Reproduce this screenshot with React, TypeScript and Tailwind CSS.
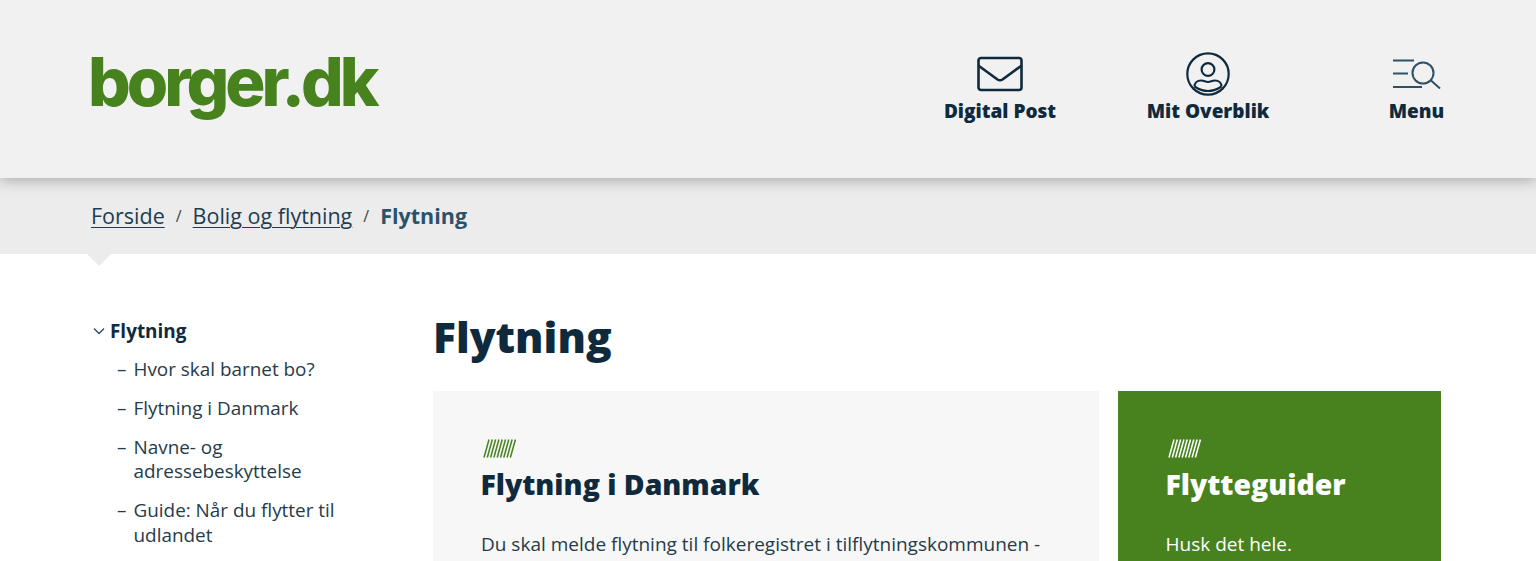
const navItems = [
  "Hvor skal barnet bo?",
  "Flytning i Danmark",
  "Navne- og adressebeskyttelse",
  "Guide: Når du flytter til udlandet",
];

const Hatch = ({ className }: { className: string }) => (
  <svg width="33" height="19" viewBox="0 0 33 19" className={className} fill="none" stroke="currentColor" strokeWidth="1.5">
    {[0, 1, 2, 3, 4, 5, 6, 7, 8].map((i) => (
      <path key={i} d={`M${1 + i * 3.3} 18.5 L${6 + i * 3.3} 0.5`} />
    ))}
  </svg>
);

const MailIcon = () => (
  <svg width="46" height="36" viewBox="0 0 46 36" fill="none" stroke="#0f2a3d" strokeWidth="2.6" strokeLinejoin="round" strokeLinecap="round">
    <rect x="1.5" y="2" width="43" height="32" rx="2.5" />
    <path d="M2 10 L20.5 23.5 Q23 25 25.5 23.5 L44 10" />
  </svg>
);

const UserIcon = () => (
  <svg width="44" height="44" viewBox="0 0 44 44" fill="none" stroke="#0f2a3d" strokeWidth="2.2">
    <circle cx="22" cy="22" r="20.7" />
    <circle cx="22" cy="17.5" r="6.4" />
    <path d="M8.5 34.5 C8.5 31 11 28.5 15 28.5 C18.5 28.5 19 30 22 30 C25 30 25.5 28.5 29 28.5 C33 28.5 35.5 31 35.5 34.5" />
    <path d="M8.5 34.5 Q22 43.5 35.5 34.5" />
  </svg>
);

const MenuIcon = () => (
  <svg width="48" height="30" viewBox="0 0 48 30" fill="none" stroke="#2f5066" strokeWidth="2">
    <path d="M0 1.5 H21" />
    <path d="M0 14.5 H15" />
    <path d="M0 28 H29" />
    <circle cx="30" cy="14" r="10.5" />
    <path d="M38 21.5 L47 29.5" />
  </svg>
);

const HeaderLink = ({ label, icon, className }: { label: string; icon: React.ReactNode; className: string }) => (
  <a className={`flex flex-col items-center ${className}`}>
    <div className="h-[44px] flex items-center justify-center">{icon}</div>
    <span className="mt-[3px] whitespace-nowrap text-[19px] leading-[25px] font-extrabold text-[#0f2a3d]">{label}</span>
  </a>
);

export default function App() {
  return (
    <div className="h-screen overflow-hidden bg-white font-['Open_Sans',sans-serif] text-[#0f2a3d]">
      <header className="relative z-10 h-[178px] bg-[#f1f1f1] shadow-[0_2px_14px_rgba(0,0,0,0.3)] pl-[88px] flex items-start">
        <div className="mt-[42px] font-['Inter',sans-serif] font-extrabold text-[#47821f] text-[67px] leading-[80px] tracking-[-4px]">
          borger.dk
        </div>
        <nav className="ml-auto flex items-start pt-[52px]">
          <HeaderLink label="Digital Post" icon={<MailIcon />} className="w-[112px] mr-[91px]" />
          <HeaderLink label="Mit Overblik" icon={<UserIcon />} className="w-[122px] mr-[120px]" />
          <HeaderLink label="Menu" icon={<MenuIcon />} className="w-[55px] mr-[92px]" />
        </nav>
      </header>

      <div className="relative h-[76px] bg-[#ececec] pl-[91px] flex items-center text-[21.5px]">
        <a className="underline underline-offset-[3px] decoration-1 text-[#1c3d52]">Forside</a>
        <span className="mx-[11px] text-[16px] text-[#444]">/</span>
        <a className="underline underline-offset-[3px] decoration-1 text-[#1c3d52]">Bolig og flytning</a>
        <span className="mx-[11px] text-[16px] text-[#444]">/</span>
        <span className="font-bold text-[#2b5269]">Flytning</span>
        <div className="absolute left-[87px] top-full w-0 h-0 border-x-[12px] border-x-transparent border-t-[12px] border-t-[#ececec]" />
      </div>

      <div className="flex pl-[90px] pr-[95px]">
        <aside className="w-[343px] shrink-0 pt-[65px]">
          <div className="flex items-center h-[24px]">
            <svg width="12" height="8" viewBox="0 0 12 8" fill="none" stroke="#2f5066" strokeWidth="1.4" className="ml-[3px] mr-[5px]">
              <path d="M1 1.5 L6 6.5 L11 1.5" />
            </svg>
            <span className="text-[18.9px] font-bold leading-[24px]">Flytning</span>
          </div>
          <ul className="-mt-[1px] pl-[27px] w-[262px]">
            {navItems.map((item) => (
              <li key={item} className="flex mt-[14.5px] text-[18.9px] leading-[24.5px] text-[#263b49]">
                <span className="w-[16.5px] shrink-0">–</span>
                <span>{item}</span>
              </li>
            ))}
          </ul>
        </aside>

        <main className="flex-1 min-w-0">
          <h1 className="mt-[56px] text-[42.5px] leading-[54px] font-extrabold text-[#0f2a3d]">Flytning</h1>
          <div className="mt-[27px] flex gap-[19px] items-start">
            <section className="w-[666px] bg-[#f7f7f7] pl-[48px] pr-[40px] pt-[48px] pb-[48px]">
              <Hatch className="text-[#47821f] ml-[2px]" />
              <h2 className="mt-[6px] -ml-[0.5px] text-[28.4px] leading-[40px] font-extrabold text-[#0f2a3d]">Flytning i Danmark</h2>
              <p className="mt-[26px] text-[19px] leading-[29px] text-[#263b49]">
                Du skal melde flytning til folkeregistret i tilflytningskommunen -
              </p>
            </section>
            <section className="w-[323px] bg-[#47821f] pl-[47.5px] pr-[32px] pt-[48px] pb-[48px] text-white">
              <Hatch className="text-white ml-[2px]" />
              <h2 className="mt-[6px] text-[28.4px] leading-[40px] font-extrabold">Flytteguider</h2>
              <p className="mt-[26px] text-[19px] leading-[29px]">Husk det hele.</p>
            </section>
          </div>
        </main>
      </div>
    </div>
  );
}
